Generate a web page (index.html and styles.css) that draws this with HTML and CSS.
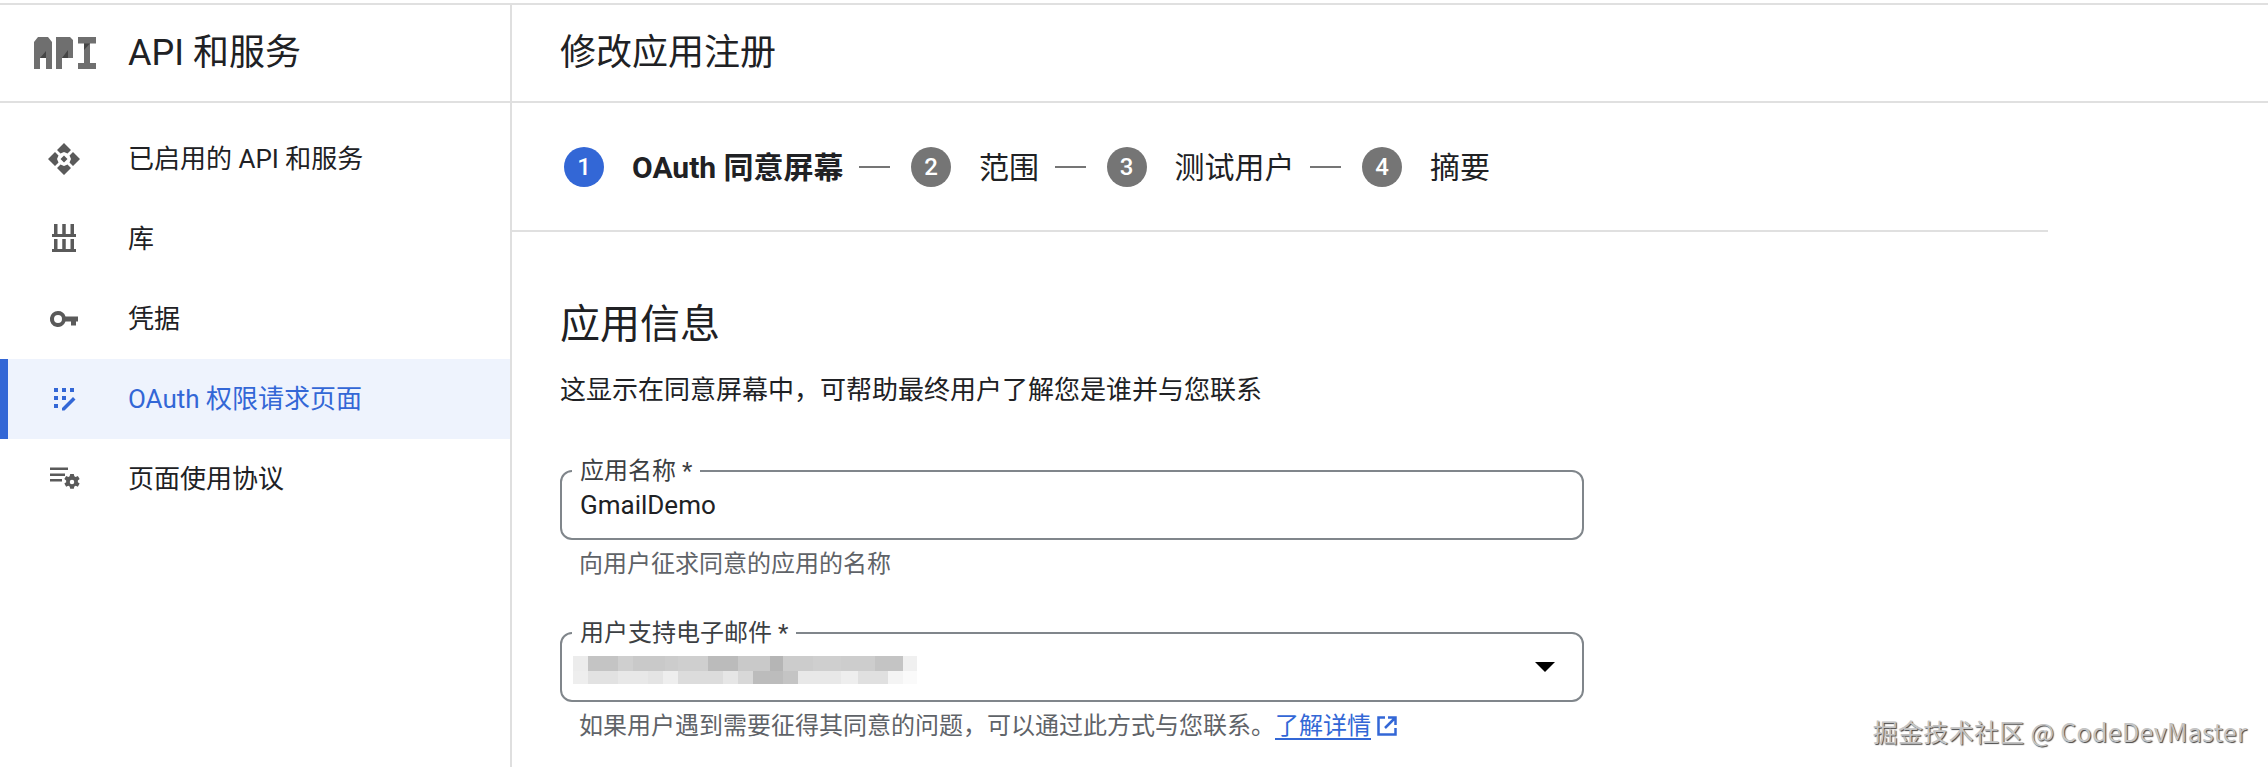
FILE: index.html
```html
<!DOCTYPE html>
<html lang="zh-CN">
<head>
<meta charset="utf-8">
<title>修改应用注册</title>
<link rel="stylesheet" href="styles.css">
</head>
<body>
<div class="shell">
  <aside class="sidebar">
    <header class="brand">
      <svg class="brand-logo" viewBox="0 0 62 32" width="62" height="32" aria-hidden="true">
        <path class="logo-fill" d="M0 5 4 0h10l4 5v27h-6V21H6v11H0zM22 0h14l3 3v18H28v11h-6zM44 0h18v6.500h-6V26h6v6H44v-6h6V6.500h-6z"/>
        <path class="logo-shade" d="M6 21l6-7v7zM28 21l6-8v8zM50 6.500h6L50 13z"/>
      </svg>
      <span class="brand-title">API 和服务</span>
    </header>
    <nav class="nav">
      <a class="nav-item">
        <svg class="nav-icon" viewBox="0 0 32 32" aria-hidden="true"><path d="m16 0 7 7-3.500 3.500L16 9l-3.500 1.500L9 7zM7 9l3.500 3.500L9 16l1.500 3.500L7 23l-7-7zM25 9l7 7-7 7-3.500-3.500L23 16l-1.500-3.500zM12.500 21.500 16 23l3.500-1.500L23 25l-7 7-7-7zM16 12.500l3.500 3.500-3.500 3.500-3.500-3.500z"/></svg>
        <span class="nav-label">已启用的 API 和服务</span>
      </a>
      <a class="nav-item">
        <svg class="nav-icon" viewBox="0 0 32 32" aria-hidden="true"><path d="M6 1h3.500v10H6zM14.250 1h3.500v10h-3.500zM22.500 1H26v10h-3.500zM4 11h24v3H4zM6 16h3.500v10H6zM14.250 16h3.500v10h-3.500zM22.500 16H26v10h-3.500zM4 26h24v3H4z"/></svg>
        <span class="nav-label">库</span>
      </a>
      <a class="nav-item">
        <svg class="nav-icon" viewBox="0 0 32 32" aria-hidden="true"><path fill-rule="evenodd" d="M10 8a8 8 0 0 1 7.500 5.500H30v5h-2v4h-5v-4h-5.500A8 8 0 1 1 10 8zm0 4a4 4 0 1 0 0 8 4 4 0 0 0 0-8z"/></svg>
        <span class="nav-label">凭据</span>
      </a>
      <a class="nav-item is-active">
        <svg class="nav-icon" viewBox="0 0 32 32" aria-hidden="true"><path d="M6 5h4v4H6zM14 5h4v4h-4zM22 5h4v4h-4zM6 13h4v4H6zM14 13h4v4h-4zM6 21h4v4H6zM14 25l11-11 2.500 2.500-11 11H14z"/></svg>
        <span class="nav-label">OAuth 权限请求页面</span>
      </a>
      <a class="nav-item">
        <svg class="nav-icon" viewBox="0 0 32 32" aria-hidden="true"><path d="M2 4.500h18V7H2zM2 10.500h15V13H2zM2 16h12v2.500H2z"/><path fill-rule="evenodd" transform="translate(24 19) scale(.9) translate(-21.500 -21)" d="M19.500 12h4l.6 2.600 1.500.8 2.400-1 2 3.400-2 1.600v1.800l2 1.600-2 3.400-2.400-1-1.500.8-.6 2.600h-4l-.6-2.600-1.500-.8-2.400 1-2-3.400 2-1.600v-1.800l-2-1.600 2-3.400 2.400 1 1.500-.8zm2 6.500a2.500 2.500 0 1 0 0 5 2.500 2.500 0 0 0 0-5z"/></svg>
        <span class="nav-label">页面使用协议</span>
      </a>
    </nav>
  </aside>
  <main class="main">
    <header class="page-head"><h1 class="page-title">修改应用注册</h1></header>
    <ol class="stepper">
      <li class="step is-current"><span class="step-num">1</span><span class="step-label">OAuth 同意屏幕</span></li>
      <li class="step"><span class="step-num">2</span><span class="step-label">范围</span></li>
      <li class="step"><span class="step-num">3</span><span class="step-label">测试用户</span></li>
      <li class="step"><span class="step-num">4</span><span class="step-label">摘要</span></li>
    </ol>
    <section class="form">
      <h2 class="section-title">应用信息</h2>
      <p class="section-desc">这显示在同意屏幕中，可帮助最终用户了解您是谁并与您联系</p>
      <div class="field">
        <div class="box">
          <span class="box-label">应用名称 *</span>
          <span class="box-value">GmailDemo</span>
        </div>
        <p class="hint">向用户征求同意的应用的名称</p>
      </div>
      <div class="field">
        <div class="box box-select">
          <span class="box-label">用户支持电子邮件 *</span>
          <div class="blurred" aria-hidden="true">
            <div class="blur-top"></div>
            <div class="blur-bottom"></div>
          </div>
          <span class="caret"></span>
        </div>
        <p class="hint">如果用户遇到需要征得其同意的问题，可以通过此方式与您联系。<a class="link">了解详情</a><svg class="ext" viewBox="0 0 20 20" aria-hidden="true"><path d="M8 1.500H1.500v17h17V12M11 1.500h7.500V9M18.500 1.500 8 12"/></svg></p>
      </div>
    </section>
  </main>
</div>
<div class="watermark">掘金技术社区 @ CodeDevMaster</div>
</body>
</html>
```
FILE: styles.css
```css
* { box-sizing: border-box; }
html, body { margin: 0; height: 100%; background: #fff; overflow: hidden; }
body {
  font-family: Roboto, "Noto Sans CJK SC", sans-serif;
  color: #202124;
  padding-top: 3px;
  position: relative;
}
.shell {
  display: flex;
  height: 764px;
  border-top: 2px solid #e0e0e0;
}
.sidebar { width: 512px; flex: none; border-right: 2px solid #dfdfdf; }
.brand {
  height: 98px;
  display: flex;
  align-items: center;
  gap: 32px;
  padding-left: 34px;
  border-bottom: 2px solid #e0e0e0;
}
.brand-logo { flex: none; }
.logo-fill { fill: #6f6f6f; }
.logo-shade { fill: #454545; }
.brand-title { font-size: 36px; line-height: 44px; }
.nav { padding-top: 16px; display: flex; flex-direction: column; }
.nav-item {
  height: 80px;
  display: flex;
  align-items: center;
  gap: 48px;
  padding-left: 48px;
  font-size: 26px;
}
.nav-label { margin-bottom: 5px; }
.nav-icon { width: 32px; height: 32px; flex: none; fill: #5a5a5a; }
.is-active { background: #eef3fd; color: #3367d6; box-shadow: inset 8px 0 0 #3367d6; }
.is-active .nav-icon { fill: #3367d6; }
.main { flex: 1; min-width: 0; }
.page-head {
  height: 98px;
  padding-left: 48px;
  display: flex;
  align-items: center;
  border-bottom: 2px solid #e0e0e0;
}
.page-title { margin: 0; font-size: 36px; font-weight: 400; line-height: 44px; }
.stepper {
  width: 1536px;
  height: 129px;
  margin: 0;
  padding: 0 0 0 52px;
  list-style: none;
  display: flex;
  align-items: center;
  border-bottom: 2px solid #e0e0e0;
}
.step { display: flex; align-items: center; gap: 28px; font-size: 30px; }
.step + .step::before {
  content: "";
  width: 31px;
  height: 2px;
  background: #757575;
  margin: 0 -7px 0 15.500px;
}
.step-label { margin-bottom: 4px; }
.step-num {
  width: 40px;
  height: 40px;
  border-radius: 50%;
  background: #757575;
  color: #fff;
  font-size: 24px;
  font-weight: 500;
  display: flex;
  align-items: center;
  justify-content: center;
}
.is-current .step-num { background: #3367d6; }
.is-current .step-label { font-weight: 700; }
.form { padding: 69px 0 0 48px; }
.section-title { margin: 0; font-size: 40px; font-weight: 400; line-height: 48px; }
.section-desc { margin: 23px 0 0; font-size: 26px; line-height: 36px; }
.field { width: 1024px; margin-top: 62px; }
.field + .field { margin-top: 52px; }
.box {
  position: relative;
  height: 70px;
  border: 2px solid #80868b;
  border-radius: 12px;
  padding: 17px 18px 0;
}
.box-label {
  position: absolute;
  left: 10px;
  top: -16px;
  padding: 0 8px;
  background: #fff;
  font-size: 24px;
  line-height: 30px;
  color: #3c4043;
}
.box-value { font-size: 26px; line-height: 32px; display: block; }
.box-select { display: flex; justify-content: space-between; padding: 0 27px 0 11px; align-items: flex-start; }
.blurred { width: 344px; margin-top: 22px; filter: blur(.5px); }
.blur-top {
  height: 15px;
  background: linear-gradient(90deg,
    #ececec 15px, #c4c4c4 15px 45px, #cfcfcf 45px 60px, #c9c9c9 60px 92px,
    #ccc 92px 105px, #cfcfcf 105px 135px, #bbb 135px 165px, #c9c9c9 165px 197px,
    #b5b5b5 197px 210px, #ccc 210px 240px, #cfcfcf 240px 268px, #cdcdcd 268px 302px,
    #c4c4c4 302px 330px, #f0f0f0 330px);
}
.blur-bottom {
  height: 13px;
  background: linear-gradient(90deg,
    #eee 15px, #e2e2e2 15px 45px, #e8e8e8 45px 75px, #e4e4e4 75px 90px,
    #eee 90px 105px, #dcdcdc 105px 150px, #e6e6e6 150px 165px, #d8d8d8 165px 180px,
    #bcbcbc 180px 210px, #c4c4c4 210px 225px, #e8e8e8 225px 268px, #eee 268px 285px,
    #e0e0e0 285px 315px, #f4f4f4 315px 330px, #fafafa 330px);
}
.caret {
  width: 0;
  height: 0;
  margin-top: 28px;
  border-left: 10px solid transparent;
  border-right: 10px solid transparent;
  border-top: 10px solid #000;
}
.hint { margin: 8px 0 0 19px; font-size: 24px; line-height: 32px; color: #5f6368; display: flex; align-items: center; }
.link { color: #3367d6; text-decoration: underline; text-decoration-thickness: 2px; text-underline-offset: 4px; }
.ext { width: 20px; height: 20px; margin-left: 6px; fill: none; stroke: #3367d6; stroke-width: 2.500; }
.watermark {
  position: absolute;
  right: 21px;
  top: 714px;
  font-family: "Noto Sans CJK SC", sans-serif;
  font-size: 25px;
  letter-spacing: .3px;
  line-height: 34px;
  color: #c4c4c4;
  text-shadow: 1px 1px 1px #444;
  white-space: nowrap;
}
```
